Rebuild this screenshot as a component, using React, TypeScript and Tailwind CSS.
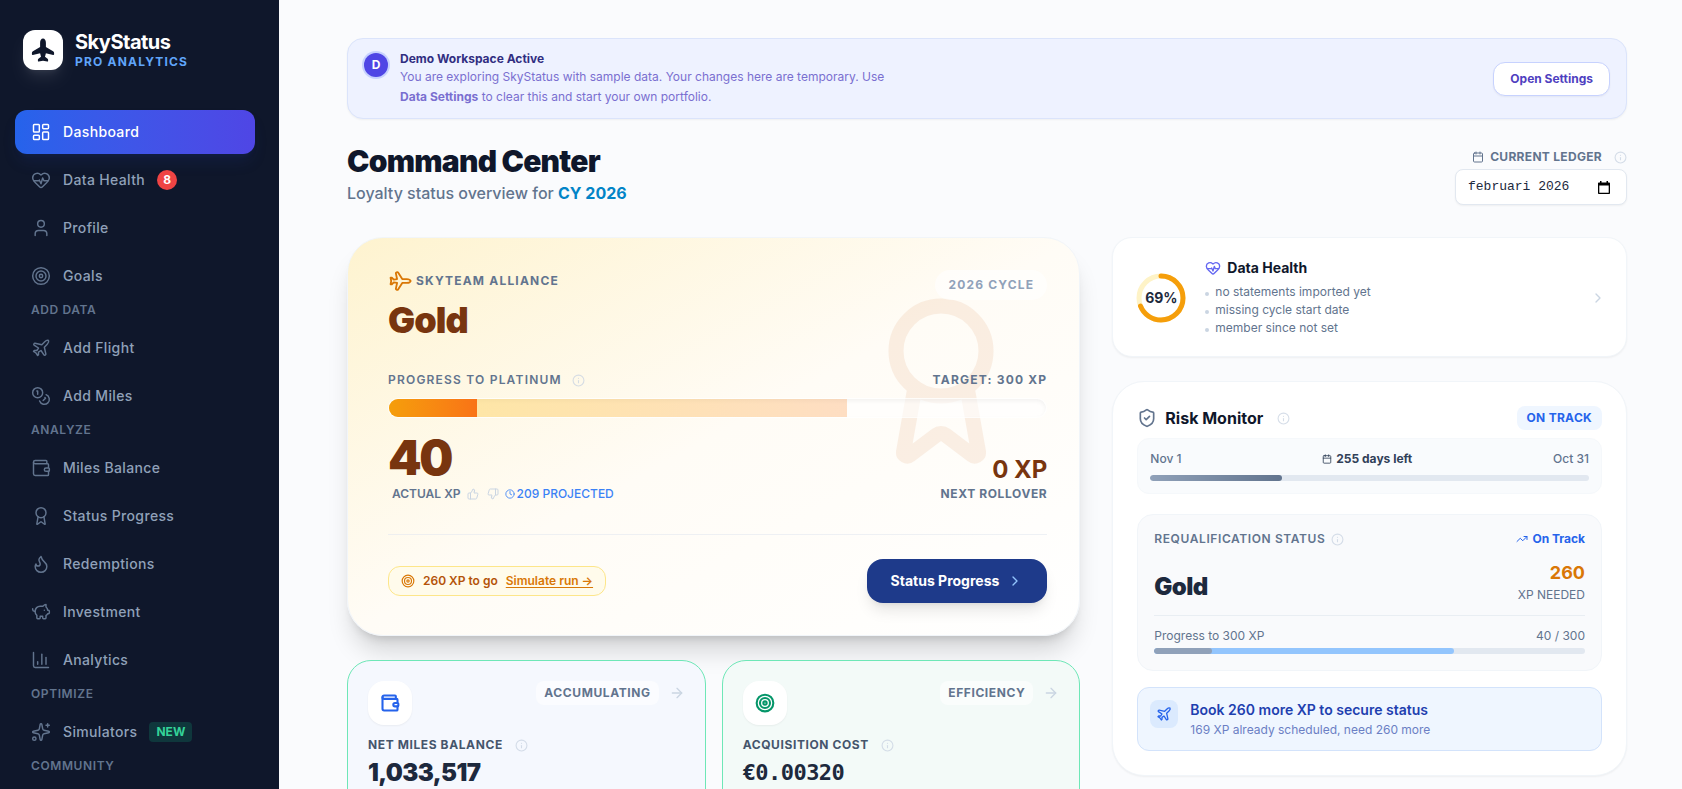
import {
  ArrowRight,
  Award,
  BarChart3,
  Calendar,
  ChevronRight,
  Clock,
  Coins,
  Flame,
  HeartPulse,
  Info,
  LayoutDashboard,
  PiggyBank,
  Plane,
  ShieldCheck,
  Sparkles,
  Target,
  ThumbsDown,
  ThumbsUp,
  TrendingUp,
  User,
  Wallet,
  type LucideIcon,
} from "lucide-react"
import type { ReactNode } from "react"

type NavItem = {
  label: string
  icon: LucideIcon
  active?: boolean
  count?: number
  tag?: string
}

const NAV_GROUPS: { title?: string; items: NavItem[] }[] = [
  {
    items: [
      { label: "Dashboard", icon: LayoutDashboard, active: true },
      { label: "Data Health", icon: HeartPulse, count: 8 },
      { label: "Profile", icon: User },
      { label: "Goals", icon: Target },
    ],
  },
  {
    title: "Add Data",
    items: [
      { label: "Add Flight", icon: Plane },
      { label: "Add Miles", icon: Coins },
    ],
  },
  {
    title: "Analyze",
    items: [
      { label: "Miles Balance", icon: Wallet },
      { label: "Status Progress", icon: Award },
      { label: "Redemptions", icon: Flame },
      { label: "Investment", icon: PiggyBank },
      { label: "Analytics", icon: BarChart3 },
    ],
  },
  {
    title: "Optimize",
    items: [{ label: "Simulators", icon: Sparkles, tag: "NEW" }],
  },
  { title: "Community", items: [] },
]

const HEALTH_ISSUES = [
  "no statements imported yet",
  "missing cycle start date",
  "member since not set",
]

function InfoButton({ label }: { label: string }) {
  return (
    <button type="button" aria-label={label} className="text-slate-300/80">
      <Info size={13} strokeWidth={2} />
    </button>
  )
}

function Logo() {
  return (
    <div className="flex size-10 items-center justify-center rounded-xl bg-white shadow-lg shadow-white/10">
      <svg viewBox="0 0 24 24" className="size-6 fill-slate-900" aria-hidden="true">
        <path d="M12 .4c-1.700 0-2.900 1.900-2.900 4.300v4.400L1.900 13.300c-.7.400-1 1-1 1.700v1.300c0 .6.500.9 1 .7l7.200-1.800.9 3.600-2.600 2c-.3.300-.5.600-.5 1v1.100c0 .5.400.7.800.6L12 22.800l4.300.7c.4.100.8-.1.800-.6v-1.100c0-.4-.2-.7-.5-1l-2.600-2 .9-3.600 7.200 1.800c.5.200 1-.1 1-.7V15c0-.7-.3-1.300-1-1.700l-7.200-4.200V4.700C14.900 2.300 13.700.4 12 .4z" />
      </svg>
    </div>
  )
}

function Sidebar() {
  return (
    <aside className="w-[279px] shrink-0 overflow-y-auto bg-slate-900 pt-[30px] [scrollbar-width:none]">
      <div className="flex items-center gap-3 px-[23px]">
        <Logo />
        <div>
          <p className="text-xl leading-6 font-bold tracking-tight text-white">SkyStatus</p>
          <p className="text-xs leading-4 font-bold tracking-widest text-[#60a5fa]">PRO ANALYTICS</p>
        </div>
      </div>

      <nav className="mt-10 flex flex-col gap-1 pr-6 pl-[15px]">
        {NAV_GROUPS.map((group, i) => (
          <div key={i} className="flex flex-col gap-1">
            {group.title && (
              <h2 className="px-4 pb-1 text-xs leading-4 font-semibold tracking-wider text-slate-500 uppercase">
                {group.title}
              </h2>
            )}
            {group.items.map((item) => {
              const Icon = item.icon
              return (
                <a
                  key={item.label}
                  href="#"
                  className={`flex h-11 items-center rounded-xl px-4 text-sm font-medium tracking-wide ${
                    item.active
                      ? "bg-linear-to-r from-[#2563eb] to-[#4f46e5] text-white shadow-lg shadow-blue-900/20"
                      : "text-slate-400"
                  }`}
                >
                  <Icon size={20} strokeWidth={1.75} className={`mr-3 ${item.active ? "" : "text-slate-500"}`} />
                  {item.label}
                  {item.count && (
                    <span className="ml-3 flex size-5 items-center justify-center rounded-full bg-[#ef4444] text-xs font-bold tracking-normal text-white">
                      {item.count}
                    </span>
                  )}
                  {item.tag && (
                    <span className="ml-3 rounded bg-[#10b981]/20 px-[7px] py-[2px] text-xs font-bold tracking-normal text-[#34d399]">
                      {item.tag}
                    </span>
                  )}
                </a>
              )
            })}
          </div>
        ))}
      </nav>
    </aside>
  )
}

function DemoBanner() {
  return (
    <section className="flex items-center justify-between rounded-2xl border border-[#dbe4fb] bg-[#eef2ff] px-4 pt-3 pb-[11px] shadow-xs">
      <div className="flex gap-3">
        <span className="mt-[2px] flex size-6 items-center justify-center rounded-full bg-[#4f46e5] text-xs font-bold text-white ring-2 ring-[#c7d2fe]">
          D
        </span>
        <div>
          <p className="text-xs leading-4 font-bold text-[#312e81]">Demo Workspace Active</p>
          <p className="max-w-[500px] text-xs leading-5 text-[#7a6fd0]">
            You are exploring SkyStatus with sample data. Your changes here are temporary. Use{" "}
            <strong className="font-bold">Data Settings</strong> to clear this and start your own portfolio.
          </p>
        </div>
      </div>
      <button
        type="button"
        className="rounded-xl border border-[#c7d2fe] bg-white px-4 py-2 text-xs font-bold text-[#4f3fc0] shadow-xs"
      >
        Open Settings
      </button>
    </section>
  )
}

function PageHeader() {
  return (
    <header className="mt-6 flex items-end justify-between">
      <div>
        <h1 className="text-3xl leading-9 font-black tracking-tight text-slate-900">Command Center</h1>
        <p className="mt-[2px] text-base leading-6 font-medium text-slate-500">
          Loyalty status overview for <span className="font-bold text-[#0284c7]">CY 2026</span>
        </p>
      </div>
      <div className="flex flex-col items-end">
        <div className="mb-1 flex items-center">
          <Calendar size={12} className="mr-[6px] text-slate-500" />
          <label htmlFor="ledger" className="mr-3 text-xs leading-4 font-bold tracking-wide text-slate-500">
            CURRENT LEDGER
          </label>
          <InfoButton label="About the current ledger" />
        </div>
        <div className="flex h-9 w-[172px] items-center justify-between rounded-lg border border-slate-200 bg-white pr-4 pl-3 shadow-xs">
          <input
            id="ledger"
            defaultValue="februari 2026"
            className="w-28 bg-transparent font-['Liberation_Mono',monospace] text-[13px] text-slate-800 outline-none"
          />
          <button type="button" aria-label="Pick month" className="text-black">
            <svg viewBox="0 0 12 13" className="h-[13px] w-3 fill-current" aria-hidden="true">
              <path d="M2 0h1.500v1.500h5V0H10v1.500h1.200c.5 0 .8.300.8.800v9.900c0 .5-.3.800-.8.800H.8c-.5 0-.8-.3-.8-.8V2.300c0-.5.3-.8.8-.8H2zM1.300 4.500v7.200h9.400V4.500z" />
            </svg>
          </button>
        </div>
      </div>
    </header>
  )
}

function StatusCard() {
  const xp = 40
  const projected = 209
  const target = 300

  return (
    <section className="relative overflow-hidden rounded-[36px] border border-slate-100 bg-white bg-linear-to-br from-[#fef3cf] via-[#fffcf6] to-white py-8 pr-8 pl-10">
      <Award
        size={180}
        className="absolute top-[53px] right-12 text-[#d2702a] opacity-10"
        aria-hidden="true"
      />
      <div className="relative">
        <div className="flex items-start justify-between">
          <div>
            <div className="flex items-center gap-[6px]">
              <Plane size={22} className="rotate-45 text-[#d97706]" />
              <span className="text-xs leading-4 font-bold tracking-widest text-slate-500">SKYTEAM ALLIANCE</span>
            </div>
            <h2 className="mt-2 text-4xl leading-10 font-black tracking-tight text-[#78350f]">Gold</h2>
          </div>
          <span className="rounded-full bg-white/60 px-[13px] py-[7px] text-xs leading-4 font-bold tracking-widest text-slate-400">
            2026 CYCLE
          </span>
        </div>

        <div className="mt-8 flex items-center justify-between text-xs leading-4 font-bold tracking-widest text-slate-500">
          <div className="flex items-center gap-[10px]">
            <span className="font-semibold">PROGRESS TO PLATINUM</span>
            <InfoButton label="About status progress" />
          </div>
          <span>TARGET: 300 XP</span>
        </div>

        <div className="relative mt-[10px] h-5 overflow-hidden rounded-full border border-white/50 bg-white/60 shadow-inner">
          <div
            className="absolute inset-y-0 left-0 bg-linear-to-r from-[#fcd34d]/50 to-[#fb923c]/30"
            style={{ width: `${(projected / target) * 100}%` }}
          />
          <div
            className="absolute inset-y-0 left-0 bg-linear-to-r from-[#f59e0b] to-[#f97316]"
            style={{ width: `${(xp / target) * 100}%` }}
          />
        </div>

        <div className="mt-4 flex items-end justify-between">
          <div>
            <p className="text-5xl leading-[48px] font-black tracking-tighter text-[#78350f]">{xp}</p>
            <div className="mt-1 flex items-center pl-1 text-xs leading-4">
              <span className="font-semibold text-slate-500">ACTUAL XP</span>
              <button type="button" aria-label="Good estimate" className="ml-[6px] text-slate-300">
                <ThumbsUp size={12} />
              </button>
              <button type="button" aria-label="Bad estimate" className="ml-2 text-slate-300">
                <ThumbsDown size={12} />
              </button>
              <Clock size={10} className="mr-[2px] ml-[6px] text-[#3b82f6]" />
              <span className="font-medium text-[#3b82f6]">{projected} PROJECTED</span>
            </div>
          </div>
          <div className="text-right">
            <p className="text-2xl leading-8 font-bold text-[#78350f]">0 XP</p>
            <p className="text-xs leading-4 font-bold tracking-wider text-slate-500">NEXT ROLLOVER</p>
          </div>
        </div>

        <div className="mt-8 flex items-center justify-between border-t border-slate-200/60 pt-6">
          <div className="flex items-center gap-2 rounded-xl border border-[#fde68a] bg-[#fffbeb] px-3 py-[6px] text-xs leading-4 font-semibold">
            <Target size={14} className="text-[#d97706]" />
            <span className="text-[#b45309]">260 XP to go</span>
            <a href="#" className="text-[#d97706] underline underline-offset-2">
              Simulate run →
            </a>
          </div>
          <button
            type="button"
            className="flex h-11 items-center gap-2 rounded-2xl bg-[#1e3a8a] px-6 text-sm font-bold text-white shadow-lg"
          >
            Status Progress
            <ChevronRight size={16} className="text-[#93c5fd]" />
          </button>
        </div>
      </div>
    </section>
  )
}

type MetricProps = {
  icon: ReactNode
  badge: string
  label: string
  value: string
  className: string
  valueClass: string
}

function MetricCard({ icon, badge, label, value, className, valueClass }: MetricProps) {
  return (
    <section className={`rounded-3xl border border-[#6ee7b7] p-5 pb-8 ${className}`}>
      <div className="flex items-start justify-between">
        <div className="flex size-11 items-center justify-center rounded-2xl bg-white shadow-xs">{icon}</div>
        <div className="flex items-center gap-[10px]">
          <span className="rounded-lg bg-white/60 px-2 py-1 text-xs leading-4 font-bold tracking-wider text-slate-500">
            {badge}
          </span>
          <ArrowRight size={16} className="text-slate-300" />
        </div>
      </div>
      <div className="mt-3 flex items-center gap-3">
        <h3 className="text-xs leading-4 font-bold tracking-wider text-slate-600">{label}</h3>
        <InfoButton label={`About ${label.toLowerCase()}`} />
      </div>
      <p className={`mt-1 leading-8 tracking-tight text-slate-800 ${valueClass}`}>{value}</p>
    </section>
  )
}

function DataHealthCard() {
  const score = 69
  return (
    <section className="flex items-center rounded-[20px] border border-slate-100 bg-white pt-5 pr-5 pb-[19px] pl-6 shadow-xs">
      <div className="relative flex size-12 items-center justify-center">
        <svg viewBox="0 0 48 48" className="absolute inset-0 -rotate-90 overflow-visible" aria-hidden="true">
          <circle cx="24" cy="24" r="22" fill="none" strokeWidth="5" stroke="#fef3c7" />
          <circle
            cx="24"
            cy="24"
            r="22"
            fill="none"
            strokeWidth="5"
            strokeLinecap="round"
            pathLength={100}
            strokeDasharray={`${score} 100`}
            stroke="#f59e0b"
          />
        </svg>
        <span className="relative text-sm font-bold text-slate-800">{score}%</span>
      </div>
      <div className="ml-5 flex-1">
        <h3 className="flex items-center gap-[6px] text-sm leading-5 font-bold text-slate-900">
          <HeartPulse size={16} className="text-[#6366f1]" />
          Data Health
        </h3>
        <ul className="mt-[5px]">
          {HEALTH_ISSUES.map((issue) => (
            <li key={issue} className="flex items-center gap-[6px] text-xs leading-[18px] text-slate-500">
              <span className="mt-1 size-1 rounded-full bg-slate-300" />
              {issue}
            </li>
          ))}
        </ul>
      </div>
      <ChevronRight size={16} className="text-slate-300" />
    </section>
  )
}

function RiskMonitor() {
  return (
    <section className="mt-6 rounded-[32px] border border-slate-100 bg-white p-6 shadow-xs">
      <div className="flex items-center justify-between">
        <div className="flex items-center">
          <ShieldCheck size={20} className="text-slate-500" />
          <h3 className="mr-[14px] ml-2 text-base leading-6 font-bold text-slate-900">Risk Monitor</h3>
          <InfoButton label="About the risk monitor" />
        </div>
        <span className="rounded-lg bg-[#eff6ff] px-[10px] py-1 text-xs leading-4 font-bold tracking-wide text-[#2563eb]">
          ON TRACK
        </span>
      </div>

      <div className="mt-2 rounded-xl border border-[#f5f8fb] bg-[#f9fbfd] p-3">
        <div className="flex items-center justify-between text-xs leading-4 font-medium text-slate-500">
          <span>Nov 1</span>
          <span className="flex items-center gap-1 font-bold text-slate-700">
            <Calendar size={10} />
            255 days left
          </span>
          <span>Oct 31</span>
        </div>
        <div className="mt-2 h-[6px] overflow-hidden rounded-full bg-slate-200">
          <div className="h-full rounded-full bg-linear-to-r from-slate-400 to-slate-500" style={{ width: "30%" }} />
        </div>
      </div>

      <div className="mt-5 rounded-2xl border border-slate-100 bg-[#f9fafc] p-4">
        <div className="flex items-center justify-between text-xs leading-4 font-bold">
          <div className="flex items-center gap-[6px]">
            <span className="font-semibold tracking-wider text-slate-500">REQUALIFICATION STATUS</span>
            <InfoButton label="About requalification" />
          </div>
          <span className="flex items-center gap-1 text-[#2563eb]">
            <TrendingUp size={12} />
            On Track
          </span>
        </div>
        <div className="mt-3 flex items-end justify-between">
          <p className="text-2xl leading-8 font-black tracking-tight text-slate-800">Gold</p>
          <div className="text-right">
            <p className="text-lg leading-7 font-bold text-[#d97706]">260</p>
            <p className="text-xs leading-4 text-slate-500">XP NEEDED</p>
          </div>
        </div>
        <div className="mt-3 border-t border-slate-200/70 pt-3">
          <div className="flex justify-between text-xs leading-4 text-slate-500">
            <span>Progress to 300 XP</span>
            <span>40 / 300</span>
          </div>
          <div className="relative mt-1 h-[6px] overflow-hidden rounded-full bg-slate-200">
            <div className="absolute inset-y-0 left-0 rounded-full bg-[#93c5fd]" style={{ width: "69.67%" }} />
            <div className="absolute inset-y-0 left-0 rounded-full bg-slate-400" style={{ width: "13.33%" }} />
          </div>
        </div>
      </div>

      <div className="mt-4 flex rounded-xl border border-[#d3e3fb] bg-[#eff6ff] p-3">
        <span className="flex size-7 items-center justify-center rounded-lg bg-[#dbeafe] text-[#2563eb]">
          <Plane size={16} />
        </span>
        <div className="ml-3">
          <p className="text-sm leading-5 font-semibold text-[#1e40af]">Book 260 more XP to secure status</p>
          <p className="mt-[2px] text-xs leading-4 text-[#6b7fc4]">169 XP already scheduled, need 260 more</p>
        </div>
      </div>
    </section>
  )
}

export default function App() {
  return (
    <div className="flex h-screen bg-slate-50 font-['Inter','Liberation_Sans',sans-serif] antialiased">
      <Sidebar />
      <main className="min-w-0 flex-1 overflow-y-auto bg-[#fafbfd] pt-[38px] pr-[55px] pb-10 pl-[68px] [scrollbar-width:none]">
        <DemoBanner />
        <PageHeader />
        <div className="mt-8 grid grid-cols-12 items-start gap-8">
          <div className="col-span-7">
            <div className="rounded-[36px] shadow-xl shadow-black/15">
              <StatusCard />
            </div>
            <div className="mt-6 grid grid-cols-2 gap-4">
              <MetricCard
                icon={<Wallet size={20} strokeWidth={2.5} className="text-[#2563eb]" />}
                badge="ACCUMULATING"
                label="NET MILES BALANCE"
                value="1,033,517"
                className="bg-[#f5f8fe]"
                valueClass="text-2xl font-black"
              />
              <MetricCard
                icon={<Target size={20} strokeWidth={2.5} className="text-[#059669]" />}
                badge="EFFICIENCY"
                label="ACQUISITION COST"
                value="€0.00320"
                className="bg-[#f3faf8]"
                valueClass="font-['DejaVu_Sans_Mono',monospace] text-[22px] font-bold"
              />
            </div>
          </div>
          <div className="col-span-5">
            <DataHealthCard />
            <RiskMonitor />
          </div>
        </div>
      </main>
    </div>
  )
}
